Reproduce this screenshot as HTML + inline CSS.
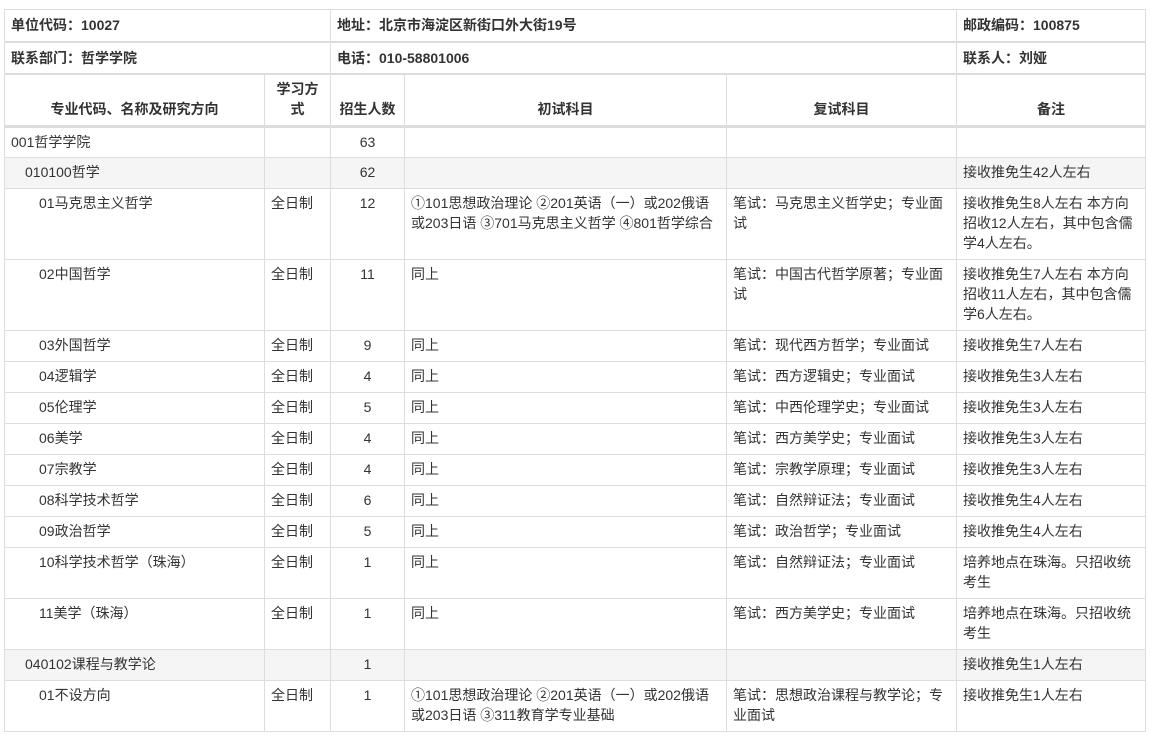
<!DOCTYPE html>
<html><head><meta charset="utf-8"><style>
body{margin:0;background:#fff;font-family:"Liberation Sans","Noto Sans CJK SC",sans-serif;font-size:14px;color:#333;}
table{position:absolute;left:4px;top:9px;border-collapse:collapse;table-layout:fixed;width:1141px;}
td{border:1px solid #ddd;padding:4px 6px 0 6px;vertical-align:top;line-height:20px;box-sizing:border-box;overflow:hidden;}
tr.i td{vertical-align:middle;font-weight:bold;padding-top:0;border-bottom:2px solid #ddd;}
tr.h td{font-weight:bold;text-align:center;vertical-align:bottom;padding-bottom:6px;border-bottom:3px solid #ddd;}
tr.g td{background:#f5f5f5;}
.c{text-align:center;}
.l1{padding-left:6px}.l2{padding-left:20px}.l3{padding-left:34px}
</style></head><body>
<table>
<colgroup><col style="width:260px"><col style="width:66px"><col style="width:74px"><col style="width:322px"><col style="width:230px"><col style="width:189px"></colgroup>
<tr class="i" style="height:32px"><td colspan="2">单位代码：10027</td><td colspan="3">地址：北京市海淀区新街口外大街19号</td><td>邮政编码：100875</td></tr>
<tr class="i" style="height:32px"><td colspan="2">联系部门：哲学学院</td><td colspan="3">电话：010-58801006</td><td>联系人：刘娅</td></tr>
<tr class="h" style="height:53px"><td>专业代码、名称及研究方向</td><td style="padding-left:8px;padding-right:8px">学习方式</td><td>招生人数</td><td>初试科目</td><td>复试科目</td><td>备注</td></tr>
<tr style="height:31px"><td class="l1">001哲学学院</td><td></td><td class="c">63</td><td></td><td></td><td></td></tr>
<tr class="g" style="height:31px"><td class="l2">010100哲学</td><td></td><td class="c">62</td><td></td><td></td><td>接收推免生42人左右</td></tr>
<tr style="height:71px"><td class="l3">01马克思主义哲学</td><td>全日制</td><td class="c">12</td><td>①101思想政治理论 ②201英语（一）或202俄语或203日语 ③701马克思主义哲学 ④801哲学综合</td><td>笔试：马克思主义哲学史；专业面试</td><td>接收推免生8人左右 本方向招收12人左右，其中包含儒学4人左右。</td></tr>
<tr style="height:71px"><td class="l3">02中国哲学</td><td>全日制</td><td class="c">11</td><td>同上</td><td>笔试：中国古代哲学原著；专业面试</td><td>接收推免生7人左右 本方向招收11人左右，其中包含儒学6人左右。</td></tr>
<tr style="height:31px"><td class="l3">03外国哲学</td><td>全日制</td><td class="c">9</td><td>同上</td><td>笔试：现代西方哲学；专业面试</td><td>接收推免生7人左右</td></tr>
<tr style="height:31px"><td class="l3">04逻辑学</td><td>全日制</td><td class="c">4</td><td>同上</td><td>笔试：西方逻辑史；专业面试</td><td>接收推免生3人左右</td></tr>
<tr style="height:31px"><td class="l3">05伦理学</td><td>全日制</td><td class="c">5</td><td>同上</td><td>笔试：中西伦理学史；专业面试</td><td>接收推免生3人左右</td></tr>
<tr style="height:31px"><td class="l3">06美学</td><td>全日制</td><td class="c">4</td><td>同上</td><td>笔试：西方美学史；专业面试</td><td>接收推免生3人左右</td></tr>
<tr style="height:31px"><td class="l3">07宗教学</td><td>全日制</td><td class="c">4</td><td>同上</td><td>笔试：宗教学原理；专业面试</td><td>接收推免生3人左右</td></tr>
<tr style="height:31px"><td class="l3">08科学技术哲学</td><td>全日制</td><td class="c">6</td><td>同上</td><td>笔试：自然辩证法；专业面试</td><td>接收推免生4人左右</td></tr>
<tr style="height:31px"><td class="l3">09政治哲学</td><td>全日制</td><td class="c">5</td><td>同上</td><td>笔试：政治哲学；专业面试</td><td>接收推免生4人左右</td></tr>
<tr style="height:51px"><td class="l3">10科学技术哲学（珠海）</td><td>全日制</td><td class="c">1</td><td>同上</td><td>笔试：自然辩证法；专业面试</td><td>培养地点在珠海。只招收统考生</td></tr>
<tr style="height:51px"><td class="l3">11美学（珠海）</td><td>全日制</td><td class="c">1</td><td>同上</td><td>笔试：西方美学史；专业面试</td><td>培养地点在珠海。只招收统考生</td></tr>
<tr class="g" style="height:31px"><td class="l2">040102课程与教学论</td><td></td><td class="c">1</td><td></td><td></td><td>接收推免生1人左右</td></tr>
<tr style="height:51px"><td class="l3">01不设方向</td><td>全日制</td><td class="c">1</td><td>①101思想政治理论 ②201英语（一）或202俄语或203日语 ③311教育学专业基础</td><td>笔试：思想政治课程与教学论；专业面试</td><td>接收推免生1人左右</td></tr>
</table>
</body></html>
